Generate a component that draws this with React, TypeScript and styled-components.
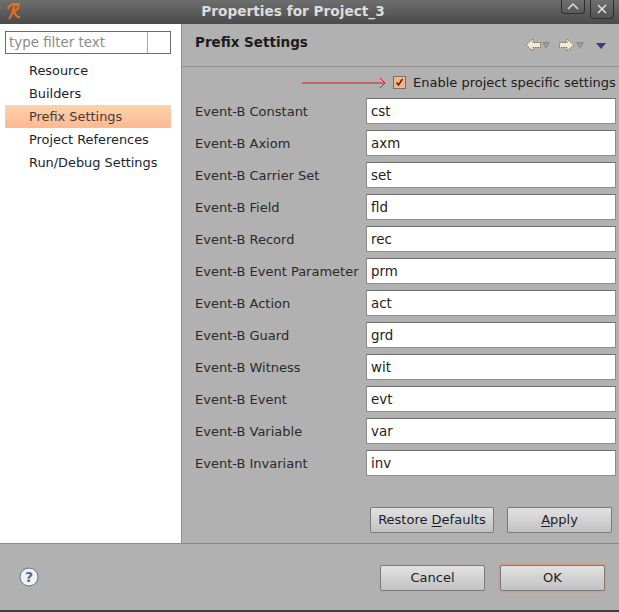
import React from "react";
import styled, { createGlobalStyle } from "styled-components";

const GlobalStyle = createGlobalStyle`
  html, body { margin: 0; padding: 0; }
  body { font-family: "DejaVu Sans", sans-serif; background: #b1b1b1; }
`;

const Dialog = styled.div`
  width: 619px;
  height: 612px;
  display: flex;
  flex-direction: column;
  overflow: hidden;
  background: #b1b1b1;
  font-size: 13px;
  color: #1c1c1c;
`;

const TitleBar = styled.div`
  height: 24px;
  flex: none;
  display: flex;
  align-items: flex-start;
  padding: 0 5px 0 6px;
  background: linear-gradient(#6e6e6e, #4a4a4a);
`;

const Title = styled.div`
  flex: 1;
  text-align: center;
  margin-left: 8px;
  padding-top: 2px;
  line-height: 18px;
  color: #dcdcdc;
  font-weight: bold;
  font-size: 13.7px;
`;

const Logo = styled.svg`
  flex: none;
  margin-top: 2px;
`;

const WinButton = styled.div<{ $height: number }>`
  width: 22px;
  height: ${(p) => p.$height}px;
  margin-left: 5px;
  border: 1px solid #2e2e2e;
  border-top: none;
  border-radius: 0 0 4px 4px;
  display: flex;
  align-items: center;
  justify-content: center;
`;

const Body = styled.div`
  flex: 1;
  display: flex;
  min-height: 0;
`;

const Sidebar = styled.div`
  width: 181px;
  flex: none;
  background: #fff;
  border-right: 1px solid #8f8f8f;
  padding-top: 7px;
`;

const Filter = styled.div`
  width: 161px;
  height: 21px;
  margin-left: 5px;
  border: 1px solid #6a6a6a;
  display: flex;
  color: #8a8a8a;
  font-size: 13.4px;
  line-height: 22px;
  padding-left: 3px;
`;

const FilterText = styled.div`
  width: 139px;
  box-sizing: border-box;
  white-space: nowrap;
  border-right: 1px solid #a8a8a8;
`;

const Tree = styled.ul`
  list-style: none;
  margin: 5px 0 0 5px;
  padding: 0;
  width: 166px;
  font-size: 12.9px;
`;

const TreeItem = styled.li<{ $selected?: boolean }>`
  height: 23px;
  line-height: 24px;
  padding-left: 24px;
  color: ${(p) => (p.$selected ? "#4a3a30" : "#1c2230")};
  background: ${(p) => (p.$selected ? "linear-gradient(#fbd3ac, #ffb892)" : "none")};
`;

const Main = styled.div`
  flex: 1;
  display: flex;
  flex-direction: column;
  min-width: 0;
`;

const Header = styled.div`
  height: 43px;
  flex: none;
  display: flex;
  align-items: flex-start;
  justify-content: space-between;
  padding: 9px 13px 0 13px;
  box-sizing: border-box;
  border-bottom: 1px solid #929292;
`;

const HeaderTitle = styled.div`
  font-weight: bold;
  font-size: 13.5px;
  line-height: 18px;
  color: #1c1c1c;
`;

const Nav = styled.div`
  display: flex;
  align-items: center;
  margin-top: 5px;
`;

const ArrowIcon = styled.svg`
  margin-right: 9px;
`;

const MenuIcon = styled.svg`
  margin: 2px 0 0 3px;
`;

const EnableRow = styled.div`
  display: flex;
  align-items: center;
  height: 31px;
  padding-left: 120px;
  white-space: nowrap;
`;

const MarkerArrow = styled.svg`
  flex: none;
`;

const Check = styled.div`
  width: 11px;
  height: 11px;
  margin: 0 7px 0 7px;
  flex: none;
  border: 1px solid #74706c;
  background: #f5b48a;
  display: flex;
  align-items: center;
  justify-content: center;
`;

const Fields = styled.div`
  display: grid;
  grid-template-columns: 171px 250px;
  grid-auto-rows: 32px;
  padding-left: 13px;
`;

const FieldLabel = styled.div`
  display: flex;
  align-items: center;
  height: 26px;
  white-space: nowrap;
  color: #2a2a2a;
`;

const FieldInput = styled.div`
  height: 26px;
  box-sizing: border-box;
  border: 1px solid #8c8c8c;
  border-top-color: #6f6f6f;
  background: #fff;
  font-size: 13.4px;
  line-height: 26px;
  padding-left: 4px;
  color: #2a2016;
`;

const PageButtons = styled.div`
  margin-top: auto;
  display: flex;
  justify-content: flex-end;
  gap: 13px;
  padding: 0 7px 10px 0;
`;

const Button = styled.div<{ $width: number; $focused?: boolean }>`
  width: ${(p) => p.$width}px;
  height: 26px;
  box-sizing: border-box;
  border: 1px solid #7a7a7a;
  border-radius: 2px;
  background: linear-gradient(#e2e2e2, #c2c2c2);
  text-align: center;
  line-height: 24px;
  color: #1c2028;
  box-shadow: ${(p) => (p.$focused ? "0 0 2px 1px #e09570" : "none")};
  u { text-underline-offset: 2px; }
`;

const Footer = styled.div`
  height: 67px;
  flex: none;
  box-sizing: border-box;
  border-top: 1px solid #8a8a8a;
  display: flex;
  align-items: center;
  padding: 1px 14px 0 19px;
  gap: 15px;
`;

const Help = styled.div`
  margin: -1px auto 0 0;
  display: flex;
`;

const BottomEdge = styled.div`
  height: 2px;
  flex: none;
  background: #3e3e3e;
`;

const fields: [string, string][] = [
  ["Event-B Constant", "cst"],
  ["Event-B Axiom", "axm"],
  ["Event-B Carrier Set", "set"],
  ["Event-B Field", "fld"],
  ["Event-B Record", "rec"],
  ["Event-B Event Parameter", "prm"],
  ["Event-B Action", "act"],
  ["Event-B Guard", "grd"],
  ["Event-B Witness", "wit"],
  ["Event-B Event", "evt"],
  ["Event-B Variable", "var"],
  ["Event-B Invariant", "inv"],
];

const treeItems = ["Resource", "Builders", "Prefix Settings", "Project References", "Run/Debug Settings"];

const NavArrow = ({ flip }: { flip?: boolean }) => (
  <ArrowIcon width="25" height="14" viewBox="0 0 25 14">
    <path
      d={flip ? "M.5 4.500h7.500V1l7 6-7 6V9.500H.5z" : "M15.500 4.500H8V1L1 7l7 6V9.500h7.500z"}
      fill="#f2ead8"
      stroke="#7a6840"
      strokeDasharray="1.500 1"
    />
    <path d="M17 4h8l-4 7z" fill="#8c8c8c" />
    <path d="M19.500 5.500h3l-1.500 3z" fill="#a8a8a8" />
  </ArrowIcon>
);

const App = () => {
  return (
    <Dialog>
      <GlobalStyle />
      <TitleBar>
        <Logo width="16" height="20" viewBox="0 0 16 20">
          <path
            d="M2 7C3 3 6 2 9 2h5M8 2C8 8 6 13 3 17M9 3c5-1 5 4-1 6 1 3 2 7 6 6"
            fill="none"
            stroke="#e8701c"
            strokeWidth="2"
          />
        </Logo>
        <Title>Properties for Project_3</Title>
        <WinButton $height={13}>
          <svg width="12" height="7" viewBox="0 0 12 7">
            <path d="M1 6l5-5 5 5" fill="none" stroke="#d8d8d8" strokeWidth="1.500" />
          </svg>
        </WinButton>
        <WinButton $height={18}>
          <svg width="10" height="10" viewBox="0 0 10 10">
            <path d="M1 1l8 8M9 1l-8 8" fill="none" stroke="#e4e4e4" strokeWidth="1.500" />
          </svg>
        </WinButton>
      </TitleBar>
      <Body>
        <Sidebar>
          <Filter>
            <FilterText>type filter text</FilterText>
          </Filter>
          <Tree>
            {treeItems.map((item) => (
              <TreeItem key={item} $selected={item === "Prefix Settings"}>
                {item}
              </TreeItem>
            ))}
          </Tree>
        </Sidebar>
        <Main>
          <Header>
            <HeaderTitle>Prefix Settings</HeaderTitle>
            <Nav>
              <NavArrow />
              <NavArrow flip />
              <MenuIcon width="10" height="6" viewBox="0 0 10 6">
                <path d="M0 0h10L5 6z" fill="#3f3a78" />
              </MenuIcon>
            </Nav>
          </Header>
          <EnableRow>
            <MarkerArrow width="84" height="12" viewBox="0 0 84 12">
              <path d="M0 6h83M78 1l5 5-5 5" fill="none" stroke="#d81818" />
            </MarkerArrow>
            <Check>
              <svg width="9" height="9" viewBox="0 0 9 9">
                <path d="M1.500 4.500l2 2.500 4-6" fill="none" stroke="#5a2a10" strokeWidth="1.600" />
              </svg>
            </Check>
            Enable project specific settings
          </EnableRow>
          <Fields>
            {fields.map(([label, value]) => (
              <React.Fragment key={label}>
                <FieldLabel>{label}</FieldLabel>
                <FieldInput>{value}</FieldInput>
              </React.Fragment>
            ))}
          </Fields>
          <PageButtons>
            <Button $width={124}>
              Restore <u>D</u>efaults
            </Button>
            <Button $width={105}>
              <u>A</u>pply
            </Button>
          </PageButtons>
        </Main>
      </Body>
      <Footer>
        <Help>
          <svg width="20" height="20" viewBox="0 0 20 20">
            <circle cx="10" cy="10" r="9" fill="#f2f2f2" stroke="#5d7396" />
            <text x="10" y="15" textAnchor="middle" fontFamily="DejaVu Sans" fontWeight="bold" fontSize="14" fill="#56698c">?</text>
          </svg>
        </Help>
        <Button $width={105}>Cancel</Button>
        <Button $width={105} $focused>OK</Button>
      </Footer>
      <BottomEdge />
    </Dialog>
  );
};

export default App;
